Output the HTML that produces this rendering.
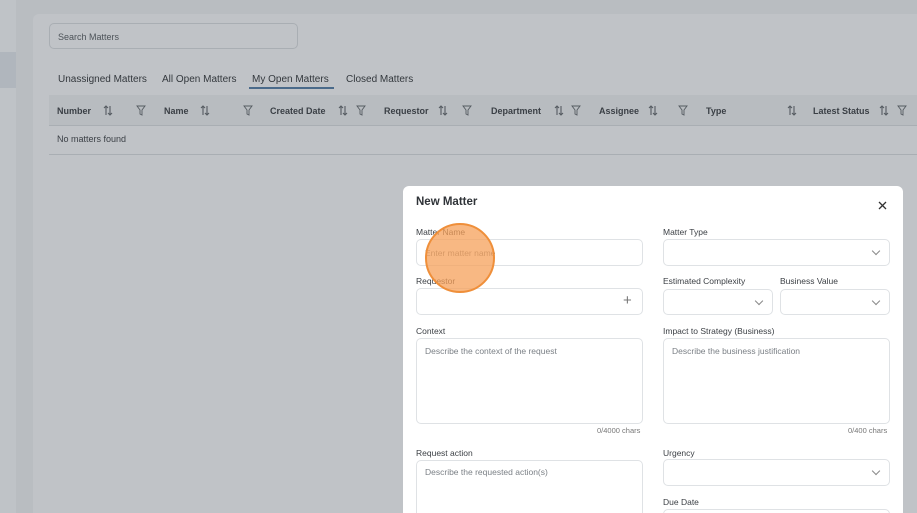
<!DOCTYPE html>
<html><head><style>
*{box-sizing:border-box;margin:0;padding:0}
html,body{width:917px;height:513px;overflow:hidden}
body{background:#b9bdc1;font-family:"Liberation Sans",sans-serif;position:relative;color:#3a3f45}
.a{position:absolute}
.side{left:0;top:0;width:16px;height:513px;background:#bfc3c7}
.panel{left:33px;top:14px;width:884px;height:499px;background:#c0c3c7;border-radius:6px 0 0 0}
.search{left:49px;top:23px;width:249px;height:26px;border:1px solid #a9aeb3;border-radius:5px;font-size:9px;padding:8px 8px;color:#4d5359}
.tab{top:74px;font-size:10px;color:#33383d}
.thead{left:49px;top:95px;width:868px;height:31px;background:#b8bcc0;border-bottom:1px solid #a9aeb3}
.th{top:106px;font-size:9px;font-weight:bold;color:#3a3f45}
.ic,.fi{top:105px}
.modal{left:403px;top:186px;width:500px;height:327px;background:#fff;border-radius:6px 6px 0 0}
.lbl{font-size:8.5px;color:#3b3f44}
.inp{border:1px solid #dfe2e5;border-radius:5px;background:#fff}
.ph{font-size:8.5px;color:#7b8086}
.chev{width:6px;height:6px;border-right:1px solid #888;border-bottom:1px solid #888;transform:rotate(45deg)}
.cnt{font-size:7.5px;color:#777}
</style></head><body>
<svg width="0" height="0" style="position:absolute"><defs>
<symbol id="s" viewBox="0 0 10 11"><path d="M3 10V1M1 3L3 1L5 3M7 1V10M5 8L7 10L9 8" fill="none" stroke="#555b61" stroke-width="1.1"/></symbol>
<symbol id="f" viewBox="0 0 10 11"><path d="M1 1H9L6 5V10L4 9V5Z" fill="none" stroke="#555b61" stroke-width="0.9"/></symbol>
</defs></svg>
<div class="a side"></div>
<div class="a" style="left:0;top:52px;width:16px;height:36px;background:#b0b6bd"></div>
<div class="a panel"></div>
<div class="a search">Search Matters</div>
<div class="a tab" style="left:58px">Unassigned Matters</div>
<div class="a tab" style="left:162px">All Open Matters</div>
<div class="a tab" style="left:252px">My Open Matters</div>
<div class="a" style="left:249px;top:87px;width:85px;height:2px;background:#4a6a8a"></div>
<div class="a tab" style="left:346px">Closed Matters</div>
<div class="a thead"></div>
<div class="a th" style="left:57px">Number</div><svg class="a ic" style="left:103px" width="10" height="11"><use href="#s"/></svg><svg class="a fi" style="left:136px" width="10" height="11"><use href="#f"/></svg>
<div class="a th" style="left:164px">Name</div><svg class="a ic" style="left:200px" width="10" height="11"><use href="#s"/></svg><svg class="a fi" style="left:243px" width="10" height="11"><use href="#f"/></svg>
<div class="a th" style="left:270px">Created Date</div><svg class="a ic" style="left:338px" width="10" height="11"><use href="#s"/></svg><svg class="a fi" style="left:356px" width="10" height="11"><use href="#f"/></svg>
<div class="a th" style="left:384px">Requestor</div><svg class="a ic" style="left:438px" width="10" height="11"><use href="#s"/></svg><svg class="a fi" style="left:462px" width="10" height="11"><use href="#f"/></svg>
<div class="a th" style="left:491px">Department</div><svg class="a ic" style="left:554px" width="10" height="11"><use href="#s"/></svg><svg class="a fi" style="left:571px" width="10" height="11"><use href="#f"/></svg>
<div class="a th" style="left:599px">Assignee</div><svg class="a ic" style="left:648px" width="10" height="11"><use href="#s"/></svg><svg class="a fi" style="left:678px" width="10" height="11"><use href="#f"/></svg>
<div class="a th" style="left:706px">Type</div><svg class="a ic" style="left:787px" width="10" height="11"><use href="#s"/></svg>
<div class="a th" style="left:813px">Latest Status</div><svg class="a ic" style="left:879px" width="10" height="11"><use href="#s"/></svg><svg class="a fi" style="left:897px" width="10" height="11"><use href="#f"/></svg>
<div class="a" style="left:57px;top:134px;font-size:9px;color:#3a3f45">No matters found</div>
<div class="a" style="left:49px;top:154px;width:868px;height:1px;background:#a9aeb3"></div>

<div class="a modal"></div>
<div class="a" style="left:416px;top:196px;font-size:11.5px;font-weight:bold;color:#2f3338">New Matter</div>
<svg class="a" style="left:878px;top:201px" width="9" height="9" viewBox="0 0 9 9"><path d="M1 1L8 8M8 1L1 8" stroke="#333" stroke-width="1.3"/></svg>

<div class="a lbl" style="left:416px;top:227px">Matter Name</div>
<div class="a inp" style="left:416px;top:239px;width:227px;height:27px"></div>
<div class="a ph" style="left:425px;top:248px">Enter matter name</div>
<div class="a lbl" style="left:663px;top:227px">Matter Type</div>
<div class="a inp" style="left:663px;top:239px;width:227px;height:27px"></div>
<div class="a chev" style="left:873px;top:248px"></div>

<div class="a lbl" style="left:416px;top:276px">Requestor</div>
<div class="a inp" style="left:416px;top:288px;width:227px;height:27px"></div>
<div class="a" style="left:623px;top:292px;font-size:15px;color:#777">+</div>
<div class="a lbl" style="left:663px;top:276px">Estimated Complexity</div>
<div class="a inp" style="left:663px;top:289px;width:110px;height:26px"></div>
<div class="a chev" style="left:756px;top:298px"></div>
<div class="a lbl" style="left:780px;top:276px">Business Value</div>
<div class="a inp" style="left:780px;top:289px;width:110px;height:26px"></div>
<div class="a chev" style="left:873px;top:298px"></div>

<div class="a lbl" style="left:416px;top:326px">Context</div>
<div class="a inp" style="left:416px;top:338px;width:227px;height:86px"></div>
<div class="a ph" style="left:425px;top:346px">Describe the context of the request</div>
<div class="a cnt" style="left:597px;top:426px">0/4000 chars</div>
<div class="a lbl" style="left:663px;top:326px">Impact to Strategy (Business)</div>
<div class="a inp" style="left:663px;top:338px;width:227px;height:86px"></div>
<div class="a ph" style="left:672px;top:346px">Describe the business justification</div>
<div class="a cnt" style="left:848px;top:426px">0/400 chars</div>

<div class="a lbl" style="left:416px;top:448px">Request action</div>
<div class="a inp" style="left:416px;top:460px;width:227px;height:70px"></div>
<div class="a ph" style="left:425px;top:467px">Describe the requested action(s)</div>
<div class="a lbl" style="left:663px;top:448px">Urgency</div>
<div class="a inp" style="left:663px;top:459px;width:227px;height:27px"></div>
<div class="a chev" style="left:873px;top:468px"></div>
<div class="a lbl" style="left:663px;top:497px">Due Date</div>
<div class="a inp" style="left:663px;top:509px;width:227px;height:27px"></div>

<div class="a" style="left:425px;top:223px;width:70px;height:70px;border-radius:50%;background:rgba(245,160,90,0.75);border:2px solid #ef8f3a"></div>
</body></html>
